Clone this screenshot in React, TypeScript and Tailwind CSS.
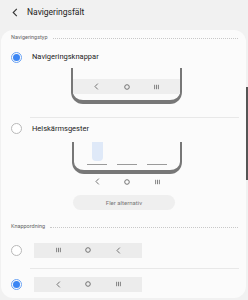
import { ReactNode } from "react";

/* ─── tiny nav glyphs ─────────────────────────── */
function Back() {
  return (
    <svg width="5" height="7" viewBox="0 0 5 7" className="block">
      <path d="M3.8 0.6 L1 3.5 L3.8 6.4" fill="none" stroke="#666" strokeWidth="0.9" />
    </svg>
  );
}

function Home() {
  return (
    <svg width="6" height="6" viewBox="0 0 6 6" className="block">
      <circle cx="3" cy="3" r="2.3" fill="none" stroke="#666" strokeWidth="0.9" />
    </svg>
  );
}

function Recents() {
  return (
    <svg width="5" height="6" viewBox="0 0 5 6" className="block">
      <path d="M0.6 0.8 V5.2 M2.5 0.8 V5.2 M4.4 0.8 V5.2" stroke="#666" strokeWidth="0.8" />
    </svg>
  );
}

function NavIcons({ order }: { order: ("back" | "home" | "recents")[] }) {
  const map = { back: <Back />, home: <Home />, recents: <Recents /> };
  return (
    <div className="flex items-center justify-center gap-[24px]">
      {order.map((k) => (
        <div key={k} className="w-[6px] flex justify-center">
          {map[k]}
        </div>
      ))}
    </div>
  );
}

/* ─── radio ───────────────────────────────────── */
function Radio({ on }: { on?: boolean }) {
  if (on)
    return (
      <div className="w-[11px] h-[11px] rounded-full border border-[#6aa3f5] flex items-center justify-center">
        <div className="w-[7px] h-[7px] rounded-full bg-[#3b86f4]" />
      </div>
    );
  return <div className="w-[11px] h-[11px] rounded-full border border-[#b9b9b9] bg-white" />;
}

function SectionLabel({ children }: { children: ReactNode }) {
  return (
    <div className="flex items-center h-[16px] pl-[10px] pr-[8px]">
      <span className="text-[5.5px] text-[#666] leading-none">{children}</span>
      <div className="flex-1 ml-[5px] border-t border-dotted border-[#c8c8c8]" />
    </div>
  );
}

function Divider() {
  return <div className="ml-[29px] mr-[7px] border-t border-[#e8e8e8]" />;
}

/* ─── MAIN ─────────────────────────────────────── */
export default function App() {
  return (
    <div
      className="relative w-[248px] h-[300px] overflow-hidden bg-[#f1f1f1]"
      style={{ fontFamily: "Roboto, 'Noto Sans', sans-serif" }}
    >
      {/* header */}
      <div className="h-[30px] flex items-start pt-[7px] pl-[12px]">
        <svg width="6" height="9" viewBox="0 0 6 9" className="mt-[1px]">
          <path d="M4.8 0.8 L1.2 4.5 L4.8 8.2" fill="none" stroke="#333" strokeWidth="1.1" />
        </svg>
        <span className="ml-[9px] text-[8.5px] leading-[11px] text-[#222]">Navigeringsfält</span>
      </div>

      {/* card */}
      <div className="ml-[1px] w-[245px] h-[268px] rounded-[12px] bg-[#fbfbfb]">
        <SectionLabel>Navigeringstyp</SectionLabel>

        {/* option 1 */}
        <div className="flex items-center h-[22px] pl-[10px]">
          <Radio on />
          <span className="ml-[10px] text-[7.5px] text-[#222]">Navigeringsknappar</span>
        </div>
        <div className="ml-[70px] w-[111px] h-[36px] border-x-2 border-b-[4px] border-[#777] rounded-b-[12px] flex flex-col">
          <div className="h-[11px]" />
          <div className="h-[15px] bg-[#eeeeee] flex items-center justify-center">
            <NavIcons order={["back", "home", "recents"]} />
          </div>
        </div>

        <div className="h-[13px]" />
        <Divider />

        {/* option 2 */}
        <div className="flex items-center h-[21px] pl-[10px]">
          <Radio />
          <span className="ml-[10px] text-[7.5px] text-[#222]">Helskärmsgester</span>
        </div>
        <div className="h-[3px]" />
        <div className="ml-[71px] w-[110px] h-[32px] border-x-2 border-b-[4px] border-[#777] rounded-b-[12px] flex flex-col">
          <div className="ml-[18px] w-[11px] h-[19px] rounded-b-[4px] bg-[#dfe9f8]" />
          <div className="mt-[3px] flex justify-center gap-[10px]">
            <div className="w-[20px] border-t border-[#9a9a9a]" />
            <div className="w-[20px] border-t border-[#9a9a9a]" />
            <div className="w-[20px] border-t border-[#9a9a9a]" />
          </div>
        </div>
        <div className="ml-[71px] w-[110px] h-[15px] flex items-center justify-center">
          <NavIcons order={["back", "home", "recents"]} />
        </div>
        <div className="h-[6px]" />
        <div className="ml-[72px] w-[102px] h-[15px] rounded-full bg-[#efefef] flex items-center justify-center">
          <span className="text-[6px] text-[#777]">Fler alternativ</span>
        </div>

        <div className="h-[9px]" />
        <SectionLabel>Knappordning</SectionLabel>

        {/* order rows */}
        <div className="flex items-center h-[30px] pl-[10px]">
          <Radio />
          <div className="ml-[12px] w-[108px] h-[15px] bg-[#ececec] flex items-center justify-center">
            <NavIcons order={["recents", "home", "back"]} />
          </div>
        </div>
        <div className="h-[3px]" />
        <Divider />
        <div className="flex items-center h-[30px] pl-[10px]">
          <Radio on />
          <div className="ml-[12px] w-[108px] h-[15px] bg-[#ececec] flex items-center justify-center">
            <NavIcons order={["back", "home", "recents"]} />
          </div>
        </div>
      </div>

      {/* scrollbar */}
      <div className="absolute right-0 top-[87px] w-[2px] h-[93px] bg-[#555]" />
    </div>
  );
}
